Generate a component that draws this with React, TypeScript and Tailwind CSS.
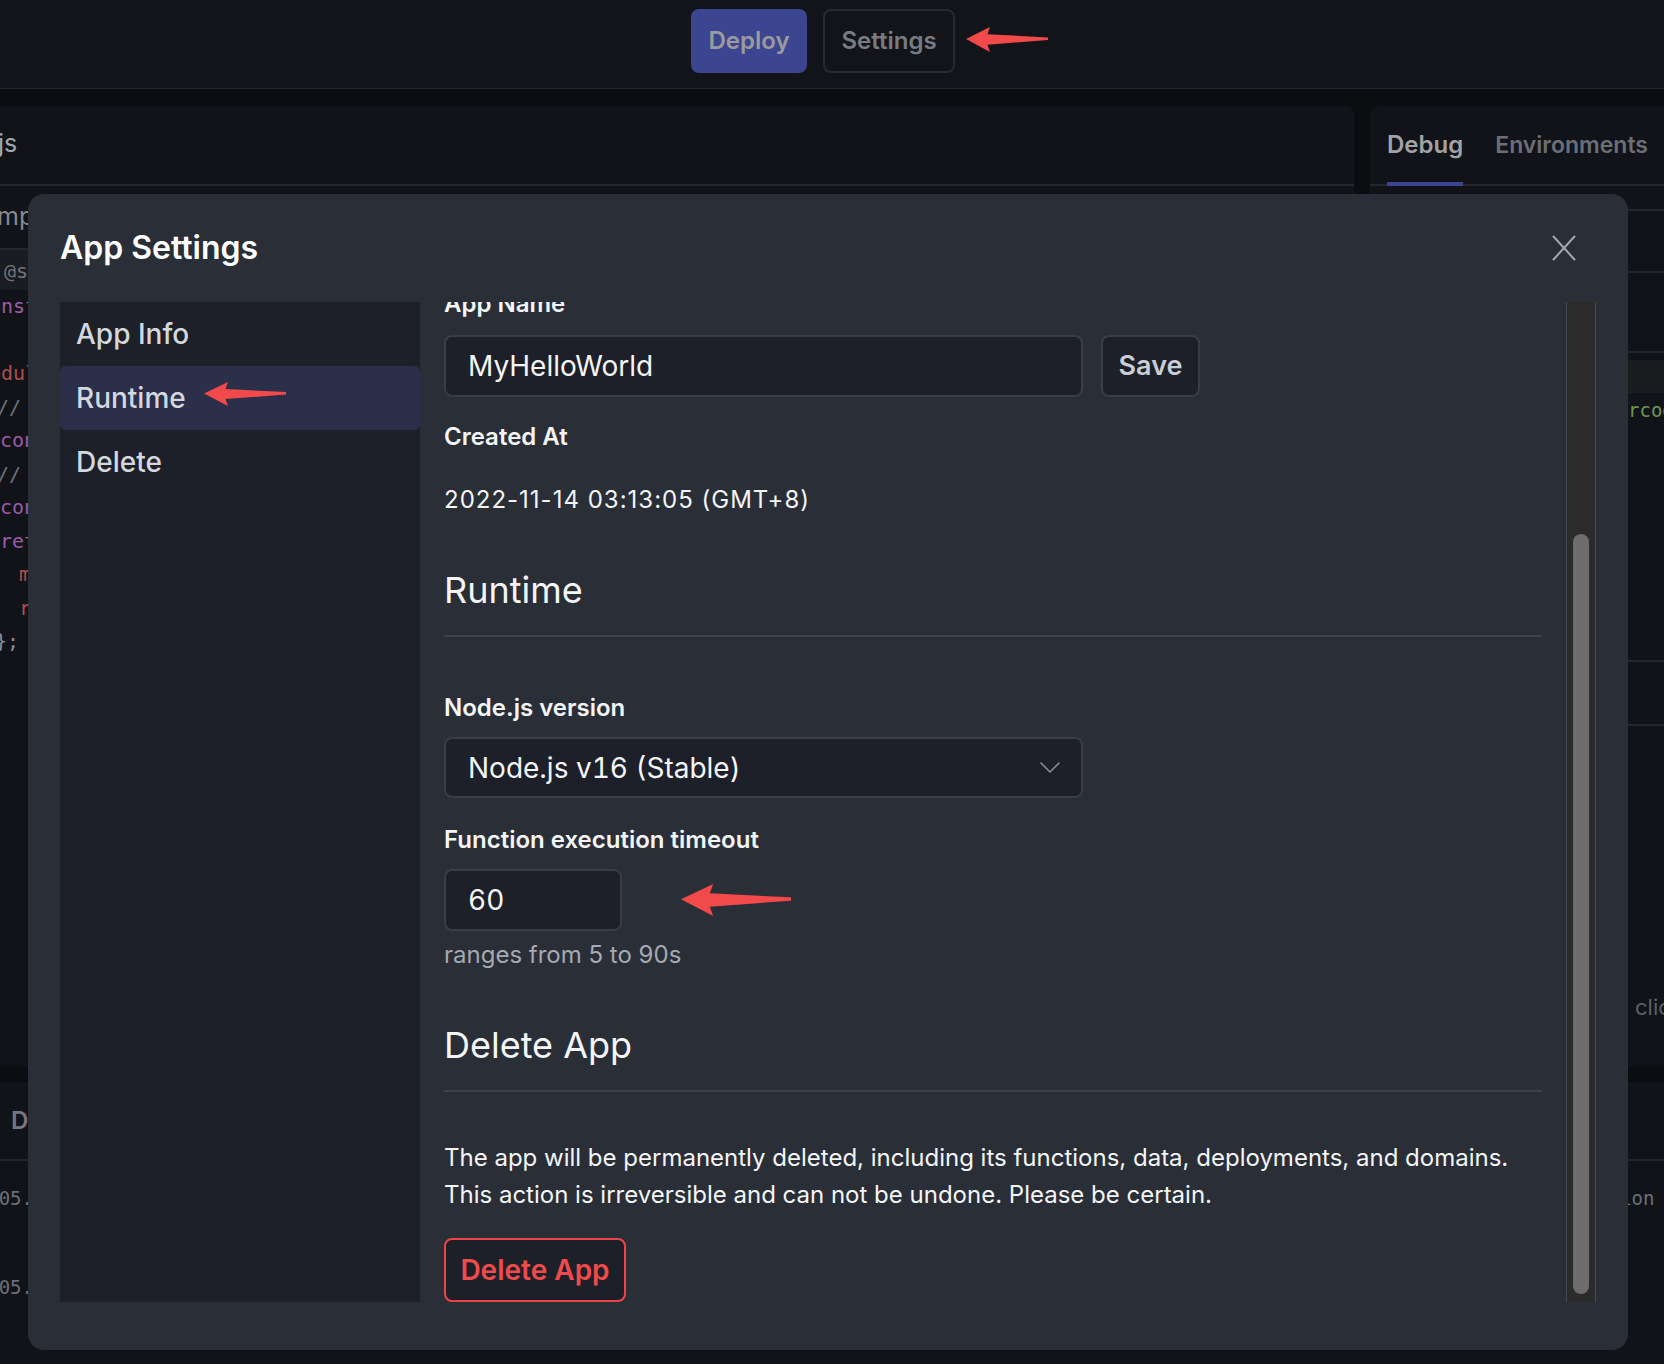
import React from "react";

function RedArrow({ className = "" }: { className?: string }) {
    return (
        <svg viewBox="0 0 82 24" preserveAspectRatio="none" className={`shrink-0 ${className}`}>
            <path d="M0 11.5 L24 0 L21.5 7 L82 10 L82 12.5 L21.5 17 L24 24 Z" fill="#f2494a" />
        </svg>
    );
}

function CloseIcon() {
    return (
        <svg viewBox="0 0 24 26" className="h-[26px] w-6" fill="none" stroke="#a3a9b4" strokeWidth="2" strokeLinecap="round">
            <path d="M1.5 1.5 L22.5 24.5" />
            <path d="M22.5 1.5 L1.5 24.5" />
        </svg>
    );
}

function ChevronDown() {
    return (
        <svg viewBox="0 0 20 11" className="h-[11px] w-5" fill="none" stroke="#8f8a95" strokeWidth="1.6" strokeLinecap="round" strokeLinejoin="round">
            <path d="M1 1 L10 10 L19 1" />
        </svg>
    );
}

const codeLines = [
    { text: "const", cls: "-ml-[23px] text-[#9b5ba7]" },
    { text: " ", cls: "" },
    { text: "module", cls: "-ml-[23px] text-[#ab504e]" },
    { text: "//", cls: "-ml-[3px] text-[#6e727a]" },
    { text: "const", cls: "text-[#9b5ba7]" },
    { text: "//", cls: "-ml-[3px] text-[#6e727a]" },
    { text: "const", cls: "text-[#9b5ba7]" },
    { text: "return", cls: "text-[#9b5ba7]" },
    { text: "message", cls: "pl-[19px] text-[#ab504e]" },
    { text: "result", cls: "pl-[19px] text-[#ab504e]" },
    { text: "};", cls: "-ml-[5px] text-[#8a8e96]" },
];

function Background() {
    return (
        <div className="flex h-full flex-col">
            {/* top bar */}
            <div className="flex h-[89px] shrink-0 items-start border-b border-[#262930] bg-[#121419] pl-[691px] pt-[9px]">
                <button className="h-16 w-[116px] rounded-lg bg-[#3b4590] text-[24px] font-semibold text-[#9b9b9e]">
                    Deploy
                </button>
                <button className="ml-4 h-16 w-[132px] rounded-lg border-2 border-[#272a31] text-[24px] font-semibold text-[#777b82]">
                    Settings
                </button>
                <RedArrow className="ml-[11px] mt-[18px] h-[25px] w-[82px]" />
            </div>
            <div className="h-[17px] shrink-0" />

            {/* editor + right panel */}
            <div className="flex h-[960px] shrink-0 gap-4">
                <div className="w-[1354px] overflow-hidden rounded-tr-lg bg-[#111318]">
                    <div className="flex h-[80px] items-center border-b-2 border-[#23262c] pb-[2px]">
                        <span className="-ml-[2px] text-[25px] text-[#a3a7b0]">js</span>
                    </div>
                    <div className="flex h-[64px] items-center border-b-2 border-[#23262c]">
                        <span className="-ml-[3px] text-[25px] text-[#858992]">mp</span>
                    </div>
                    <div className="flex h-[40px] items-center bg-[#1a1c21] pt-[2px] font-['DejaVu_Sans_Mono',monospace] text-[20px] text-[#6e727a]">
                        <span className="pl-[4px]">@see</span>
                    </div>
                    <div className="font-['DejaVu_Sans_Mono',monospace] text-[20px]">
                        {codeLines.map((l, i) => (
                            <div key={i} className="h-[33.5px] whitespace-pre leading-[33.5px]">
                                <span className={`inline-block ${l.cls}`}>{l.text}</span>
                            </div>
                        ))}
                    </div>
                </div>

                <div className="flex-1 overflow-hidden rounded-tl-lg bg-[#111318]">
                    <div className="flex h-[80px] items-stretch border-b-2 border-[#23262c] pl-[17px]">
                        <div className="-mb-[2px] flex items-center border-b-4 border-[#3d4592] pt-[2px] text-[24px] font-semibold text-[#a3a3a6]">
                            Debug
                        </div>
                        <div className="ml-[32px] flex items-center text-[23px] font-semibold text-[#6b6e76]">
                            Environments
                        </div>
                    </div>
                    <div className="h-[25px] border-b-2 border-[#23262c]" />
                    <div className="h-[62px] border-b-2 border-[#23262c]" />
                    <div className="h-[80px] border-b-2 border-[#23262c]" />
                    <div className="mt-[7px] h-[33px] bg-[#1a1c20]" />
                    <div className="h-[34px] whitespace-nowrap pl-[258px] font-['DejaVu_Sans_Mono',monospace] text-[19px] leading-[34px] text-[#6a9955]">
                        rcode
                    </div>
                    <div className="h-[235px] border-b-2 border-[#23262c]" />
                    <div className="h-[64px] border-b-2 border-[#23262c]" />
                    <div className="mt-[265px] whitespace-nowrap pl-[246px] text-[22px] text-[#5d6068]">e click</div>
                </div>
            </div>

            <div className="h-[16px] shrink-0" />

            {/* bottom panel */}
            <div className="flex-1 bg-[#111318]">
                <div className="flex h-[79px] items-center border-b-2 border-[#23262c] pl-[11px] text-[24px] font-semibold text-[#74777f]">
                    Deployments
                </div>
                {["03:13:05.412", "03:13:05.418"].map((t, i) => (
                    <div key={i} className="flex h-[89px] pt-[20px] font-['DejaVu_Sans_Mono',monospace] text-[19px] leading-[34px] text-[#6b6f77]">
                        <div className="w-[1620px] shrink-0 overflow-hidden whitespace-pre">
                            <span className="-ml-[70px] inline-block">{t}</span>
                        </div>
                        <div className="whitespace-pre">{i === 0 ? "ion" : ""}</div>
                    </div>
                ))}
            </div>
        </div>
    );
}

function Label({ children, className = "" }: { children: React.ReactNode; className?: string }) {
    return <div className={`h-8 text-[24px] font-semibold leading-8 text-[#f4f5f7] ${className}`}>{children}</div>;
}

function SettingsModal() {
    const nav = ["App Info", "Runtime", "Delete"];

    return (
        <div className="absolute left-[28px] top-[194px] flex h-[1156px] w-[1600px] flex-col rounded-2xl bg-[#2a2e37]">
            <div className="flex h-[108px] items-center justify-between pl-8 pr-[52px]">
                <h2 className="text-[32px] font-semibold text-white">App Settings</h2>
                <CloseIcon />
            </div>

            <div className="flex h-[1000px] gap-6 px-8">
                <aside className="w-[360px] shrink-0 bg-[#1e2029]">
                    {nav.map((item) => (
                        <div
                            key={item}
                            className={`flex h-16 items-center rounded-md pl-[16px] text-[28px] font-medium text-[#d3d7de] ${
                                item === "Runtime" ? "bg-[#2b2f4a]" : ""
                            }`}
                        >
                            {item}
                            {item === "Runtime" && <RedArrow className="mb-2 ml-[18px] h-[24px] w-[82px]" />}
                        </div>
                    ))}
                </aside>

                <div className="flex flex-1 gap-6">
                    <div className="flex-1 overflow-hidden">
                        <div className="-mt-[14px] flex flex-col">
                            <Label>App Name</Label>
                            <div className="mt-[15px] flex gap-[18px]">
                                <input
                                    type="text"
                                    defaultValue="MyHelloWorld"
                                    className="h-[62px] w-[639px] rounded-lg border-2 border-[#393d48] bg-[#1e2029] pl-[22px] text-[28px] text-[#f4f5f7] outline-none"
                                />
                                <button className="h-[62px] w-[99px] rounded-lg border-2 border-[#393d48] bg-[#1e2029] text-[27px] font-semibold text-[#c9cdd5]">
                                    Save
                                </button>
                            </div>

                            <Label className="mt-6">Created At</Label>
                            <div className="mt-[31px] h-8 text-[24px] leading-8 tracking-[1px] text-[#f4f5f7]">
                                2022-11-14 03:13:05 (GMT+8)
                            </div>

                            <h3 className="mt-[52px] border-b-2 border-[#3c414c] pb-[23px] text-[36px] leading-[44px] text-[#f4f5f7]">
                                Runtime
                            </h3>

                            <Label className="mt-[55px]">Node.js version</Label>
                            <div className="mt-[13px] flex h-[61px] w-[639px] items-center justify-between rounded-lg border-2 border-[#393d48] bg-[#1e2029] pl-[22px] pr-[21px]">
                                <span className="text-[28px] tabular-nums text-[#f4f5f7]">Node.js v16 (Stable)</span>
                                <ChevronDown />
                            </div>

                            <Label className="mt-[26px]">Function execution timeout</Label>
                            <div className="mt-[13px] flex items-center">
                                <input
                                    type="text"
                                    defaultValue="60"
                                    className="h-[62px] w-[178px] rounded-lg border-2 border-[#393d48] bg-[#1e2029] pl-[22px] text-[28px] tabular-nums text-[#f4f5f7] outline-none"
                                />
                                <RedArrow className="ml-[59px] h-[32px] w-[110px]" />
                            </div>
                            <div className="mt-2 h-8 text-[24px] leading-8 text-[#a4a9b3]">ranges from 5 to 90s</div>

                            <h3 className="mt-[52px] border-b-2 border-[#3c414c] pb-[23px] text-[36px] leading-[44px] text-[#f4f5f7]">
                                Delete App
                            </h3>
                            <p className="mt-[47px] text-[24px] leading-[37px] text-[#f4f5f7]">
                                The app will be permanently deleted, including its functions, data, deployments, and domains.
                                <br />
                                This action is irreversible and can not be undone. Please be certain.
                            </p>
                            <button className="mt-[25px] h-16 w-[182px] rounded-lg border-2 border-[#ef4446] bg-[#1e2029] text-[28px] font-semibold text-[#f04a4b]">
                                Delete App
                            </button>
                        </div>
                    </div>

                    <div className="flex w-[30px] shrink-0 justify-center border-x border-[#4a4a4a] bg-[#2b2b2b]">
                        <div className="mt-[232px] h-[760px] w-4 rounded-full bg-[#6d6d6d]" />
                    </div>
                </div>
            </div>
        </div>
    );
}

export default function App() {
    return (
        <div className="relative h-[1364px] w-[1664px] overflow-hidden bg-[#0c0d10] font-[Inter,'Noto_Sans',sans-serif]">
            <Background />
            <SettingsModal />
        </div>
    );
}
